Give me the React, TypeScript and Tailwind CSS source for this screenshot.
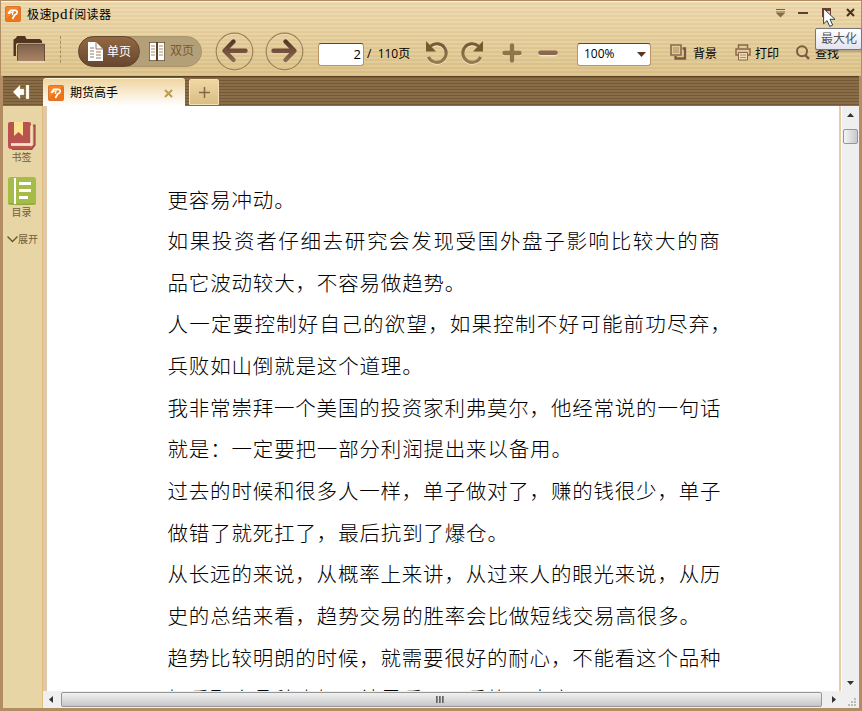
import React from "react";

type Line = { text: string; pitch: number };

const lines: Line[] = [
  { text: "更容易冲动。", pitch: 21.33 },
  { text: "如果投资者仔细去研究会发现受国外盘子影响比较大的商", pitch: 22.16 },
  { text: "品它波动较大，不容易做趋势。", pitch: 21.33 },
  { text: "人一定要控制好自己的欲望，如果控制不好可能前功尽弃，", pitch: 21.72 },
  { text: "兵败如山倒就是这个道理。", pitch: 21.33 },
  { text: "我非常崇拜一个美国的投资家利弗莫尔，他经常说的一句话", pitch: 21.3 },
  { text: "就是：一定要把一部分利润提出来以备用。", pitch: 21.33 },
  { text: "过去的时候和很多人一样，单子做对了，赚的钱很少，单子", pitch: 21.3 },
  { text: "做错了就死扛了，最后抗到了爆仓。", pitch: 21.33 },
  { text: "从长远的来说，从概率上来讲，从过来人的眼光来说，从历", pitch: 21.3 },
  { text: "史的总结来看，趋势交易的胜率会比做短线交易高很多。", pitch: 21.33 },
  { text: "趋势比较明朗的时候，就需要很好的耐心，不能看这个品种", pitch: 21.3 },
  { text: "好看那个品种也好，结果看不了看执不盘实", pitch: 21.33 },
];
const FONT_SIZE = 20.5;

const ui = "font-['Open_Sans','Noto_Sans_CJK_SC',sans-serif]";

function Logo() {
  return (
    <svg width="16" height="16" viewBox="0 0 16 16" className="shrink-0">
      <rect x=".5" y=".5" width="15" height="15" rx="1" fill="#ee7415" stroke="#d9752c" />
      <path d="M1 1h14L1 13Z" fill="#ff983c" opacity=".45" />
      <path d="M3.2 7.8 5.6 4.4h4.6c3.2.2 2.4 3.8-.4 4.4L7.4 13" fill="none" stroke="#fff" strokeWidth="1.7" />
      <path d="M3.6 7.4 8 5.8 7.4 9.2" fill="none" stroke="#fff" strokeWidth="1.2" />
    </svg>
  );
}

function ArrowButton({ right = false }: { right?: boolean }) {
  return (
    <svg width="39" height="39" viewBox="0 0 39 39" className={right ? "-scale-x-100" : ""}>
      <defs>
        <linearGradient id={right ? "ar" : "al"} x1="0" y1="7" x2="0" y2="32" gradientUnits="userSpaceOnUse">
          <stop stopColor="#4f3323" />
          <stop offset="1" stopColor="#997056" />
        </linearGradient>
      </defs>
      <circle cx="19.5" cy="20.3" r="18.2" fill="none" stroke="#f3e0b6" />
      <circle cx="19.5" cy="19.5" r="18.3" fill="none" stroke="#9b815a" strokeWidth="1.2" />
      <path d="M18.5 9.5 9.5 18.8l9 9.2M10 18.8h20.5" fill="none" stroke={right ? "url(#ar)" : "url(#al)"} strokeWidth="4.4" strokeLinecap="round" strokeLinejoin="round" />
    </svg>
  );
}

function Rotate({ right = false }: { right?: boolean }) {
  return (
    <svg width="24" height="25" viewBox="-1 0 24 25" className={right ? "-scale-x-100" : ""}>
      <defs>
        <linearGradient id={right ? "rr" : "rl"} x1="0" y1="0" x2="0" y2="24" gradientUnits="userSpaceOnUse">
          <stop stopColor="#70552f" />
          <stop offset="1" stopColor="#9a8056" />
        </linearGradient>
      </defs>
      <path d="M4.6 6.4A9.3 9.3 0 1 1 2.4 17" fill="none" stroke="#f6e8c2" strokeWidth="3" opacity=".7" />
      <path d="M4.6 5.2A9.3 9.3 0 1 1 2.4 15.8" fill="none" stroke={right ? "url(#rr)" : "url(#rl)"} strokeWidth="3" />
      <path d="M0 0v10.4h10Z" fill="#75592f" />
    </svg>
  );
}

function Toolbar() {
  return (
    <div className="flex h-[51px] items-center pl-[12px]">
      <svg width="34" height="28" viewBox="0 0 34 28" className="mb-[5px]">
        <defs>
          <linearGradient id="folder" x1="0" y1="0" x2="0" y2="1"><stop stopColor="#7d604b" /><stop offset="1" stopColor="#aa8366" /></linearGradient>
        </defs>
        <path d="M.5 21V4.5L3 3l1-2h8l1.5 3H27l2 2v2H4.5L3 9v12Z" fill="#50351f" />
        <path d="M4 26 5 9h26.500l.5 17Z" fill="url(#folder)" />
        <path d="M4.500 25.500V10l1-.8h26V26" fill="none" stroke="#6b4c36" />
        <path d="M5 27h27" stroke="#f5e5be" />
      </svg>
      <div className="mb-1 ml-[13px] h-[27px] border-l border-dashed border-[#a58d60]" />
      <div className="ml-[17px] flex h-[31px] w-[124px] rounded-full border border-[#a9946c] bg-[#b4a078]">
        <div className="-ml-px -mt-px flex h-[31px] w-[62px] items-center rounded-full border border-[#65472d] bg-linear-to-b from-[#926840] to-[#684730] pl-[9px]">
          <svg width="15" height="19" viewBox="0 0 15 19"><path d="M0 0h8l7 7v12H0Z" fill="#fff" /><path d="M8 0v7h7M2 6h4M2 9h4M2 12h4M2 15h4M8 10h5M8 13h5M8 16h5" fill="none" stroke="#9b7b5d" /></svg>
          <span className={`${ui} ml-1 whitespace-nowrap text-[12px] leading-none text-white`}>单页</span>
        </div>
        <div className="flex items-center pb-[1px] pl-[9px]">
          <svg width="16" height="19" viewBox="0 0 16 19"><path d="M0 0h16v19H0Z" fill="#fff" stroke="#5f4325" strokeWidth="1.5" /><path d="M8 0v19" stroke="#5f4325" strokeWidth="2" /><path d="M2 4h4M2 7h4M2 10h4M2 13h4M10 4h4M10 7h4M10 10h4M10 13h4" stroke="#a88c6d" /></svg>
          <span className={`${ui} ml-[5px] whitespace-nowrap text-[12px] leading-none text-[#785a31]`}>双页</span>
        </div>
      </div>
      <div className="ml-[13px] flex gap-[11px]"><ArrowButton /><ArrowButton right /></div>
      <div className={`${ui} ml-[14px] mt-[5px] flex h-[23px] w-[46px] items-center justify-end rounded-[3px] border border-[#b89567] border-t-[#71401d] bg-white pr-[2px] text-[13px] leading-none text-black`}>2</div>
      <div className={`${ui} mt-[5px] ml-[3px] w-[58px] whitespace-nowrap text-[12px] leading-none text-black`}>/&nbsp; 110页</div>
      <div className="mt-[3px] flex gap-[11px]"><Rotate /><Rotate right /></div>
      <svg width="20" height="20" viewBox="0 0 20 20" className="mt-[2px] ml-[18px]">
        <path d="M10 3.500v14.500M2.500 11h15" stroke="#f5e6bb" strokeWidth="4.500" strokeLinecap="round" />
        <path d="M10 2.500v15M2.500 10h15" stroke="#8d754c" strokeWidth="4.400" strokeLinecap="round" />
      </svg>
      <svg width="20" height="8" viewBox="0 0 20 8" className="mt-[3px] ml-[16px]">
        <path d="M2.500 5h15" stroke="#f5e6bb" strokeWidth="4.800" strokeLinecap="round" />
        <path d="M2.500 3.800h15" stroke="#8b6951" strokeWidth="4.600" strokeLinecap="round" />
      </svg>
      <div className={`${ui} mt-[5px] ml-[19px] flex h-[23px] w-[74px] items-center rounded-[3px] border border-[#b89567] border-t-[#71401d] bg-white pl-[6px] text-[12px] leading-none text-black`}>
        100%
        <svg width="9" height="5" className="ml-auto mr-1"><path d="M0 0h9L4.500 5Z" fill="#5b351b" /></svg>
      </div>
      <svg width="17" height="17" viewBox="0 0 17 17" className="mt-[2px] ml-[19px]">
        <path d="M1 1h10v10H1Z" fill="none" stroke="#89694c" strokeWidth="1.600" />
        <path d="M3 4h6M3 6h6M3 8h6" stroke="#aa8e68" />
        <path d="M12.500 4.500H15v10H5.500V12" fill="none" stroke="#795844" strokeWidth="2.300" />
      </svg>
      <span className={`${ui} mt-[5px] ml-[6px] text-[12px] leading-none text-black`}>背景</span>
      <svg width="16" height="17" viewBox="0 0 16 17" className="mt-[2px] ml-[18px]">
        <path d="M3.500 4V1h9v3M3 11H1V5h14v6h-2" fill="none" stroke="#896448" strokeWidth="1.400" />
        <path d="M3.500 8.500h9v7.500h-9Z" fill="#f0deb6" stroke="#896448" />
        <path d="M5 11h6M5 13.500h6" stroke="#a98b65" />
      </svg>
      <span className={`${ui} mt-[5px] ml-[4px] text-[12px] leading-none text-black`}>打印</span>
      <svg width="14" height="15" viewBox="0 0 14 15" className="mt-[2px] ml-[17px]"><circle cx="6" cy="6.300" r="5" fill="none" stroke="#7b5a3e" strokeWidth="2" /><path d="m9.500 10.300 3.500 3.500" stroke="#7b5a3e" strokeWidth="2.400" /></svg>
      <span className={`${ui} mt-[5px] ml-[5px] text-[12px] leading-none text-black`}>查找</span>
    </div>
  );
}

function Header() {
  return (
    <header className="h-[76px] shrink-0 border-t border-[#b28c63] bg-[repeating-linear-gradient(to_bottom,#fff2_0_2px,#c99c440d_2px_4px),linear-gradient(#ecd7aa,#d9bf85)]">
      <div className="flex h-[25px] items-center border-t border-[#fff1cf] pl-[4px] pr-[6px]">
        <Logo />
        <h1 className="ml-[6px] flex items-center whitespace-nowrap font-['Noto_Sans_CJK_SC',sans-serif] text-[12px] leading-none tracking-[0.4px] text-black">
          极速<span className="font-['Liberation_Serif',serif] text-[15px] tracking-[0.8px]">pdf</span>阅读器
        </h1>
        <svg width="11" height="10" viewBox="0 0 11 10" className="ml-auto -mt-[3px]"><path d="M1 1.500h9M1 4h9" stroke="#7d6142" strokeWidth="1.200" /><path d="M1 5h9L5.500 9.500Z" fill="#876b4b" /></svg>
        <div className="ml-[12px] -mt-[2px] h-[2px] w-[10px] bg-[#5b402b]" />
        <div className="ml-[14px] -mt-1 h-[9px] w-[9px] border border-t-[3px] border-[#69402f]" />
        <svg width="9" height="9" viewBox="0 0 9 9" className="ml-[15px] -mt-[3px]"><path d="m1 1 7 7M8 1 1 8" stroke="#4a2d1d" strokeWidth="2" /></svg>
      </div>
      <Toolbar />
    </header>
  );
}

function Tabs() {
  return (
    <div className="flex h-[30px] shrink-0 items-end border-t border-[#5f4221] bg-[repeating-linear-gradient(to_bottom,#745837_0_1px,#886d46_1px_3px)]">
      <button className="mb-[7px] ml-[10px] flex h-[15px] items-center">
        <svg width="17" height="14" viewBox="0 0 17 14"><path d="M0 7 7 0v4h4v6H7v4ZM13 0h3v14h-3Z" fill="#fff" stroke="#d9bd78" strokeWidth=".4" /></svg>
      </button>
      <div className="ml-[13px] flex h-[28px] w-[142px] items-center rounded-t-[3px] border-t border-[#fff4d0] bg-linear-to-b from-[#efd5a0] to-white pl-[5px]">
        <Logo />
        <span className={`${ui} ml-[6px] text-[12px] leading-none text-black`}>期货高手</span>
        <svg width="9" height="9" viewBox="0 0 9 9" className="ml-auto mr-[12px] mt-[2px]"><path d="m1 1 7 7M8 1 1 8" stroke="#bd9c52" strokeWidth="2" /></svg>
      </div>
      <div className="ml-[4px] mb-px flex h-[26px] w-[30px] items-center justify-center rounded-t-[2px] border border-[#f2e1b8] bg-linear-to-b from-[#f0d6a2] to-[#d9bf85]">
        <svg width="11" height="11"><path d="M5.500 0v11M0 5.500h11" stroke="#806948" strokeWidth="1.500" /></svg>
      </div>
    </div>
  );
}

function Sidebar() {
  const label = `${ui} text-[10px] leading-none text-[#705d3a]`;
  return (
    <aside className="flex w-[40px] shrink-0 flex-col items-center border-r border-[#dfbd76] bg-[#e8d5a6] pt-[16px] pr-[2px]">
      <svg width="28" height="29" viewBox="0 0 28 29">
        <path d="M25 3.500h1.500v19.500l-3 4H4" fill="none" stroke="#ac4847" strokeWidth="2.200" />
        <path d="M2 0h19q2 0 2 2v19H3v3h21l-2 3H3q-3 0-3-3V2q0-2 2-2Z" fill="#b9534f" />
        <path d="M3 22.500h20V3.500" fill="none" stroke="#f5e3c3" strokeWidth="1.500" />
        <path d="M6 0h9v14l-4.500-4L6 14Z" fill="#fde28f" />
      </svg>
      <span className={`${label} mt-[1px]`}>书签</span>
      <svg width="28" height="28" viewBox="0 0 28 28" className="mt-[15px]"><rect width="28" height="28" rx="2.500" fill="#a6bc49" /><path d="M.5 26.700q13 1.500 27 0" fill="none" stroke="#8aa13b" /><path d="M6 1h2v26H6ZM11 5h12v3H11ZM11 12h12v3H11ZM11 19h9v3h-9Z" fill="white" /></svg>
      <span className={`${label} mt-[2px]`}>目录</span>
      <div className="mt-[17px] flex w-full items-center pl-[4px]">
        <svg width="11" height="7" className="shrink-0"><path d="m.5.5 5 5 5-5" fill="none" stroke="#64512f" strokeWidth="1.300" /></svg>
        <span className={`${label} whitespace-nowrap`}>展开</span>
      </div>
    </aside>
  );
}

function Pointer() {
  return (
    <svg width="13" height="20" viewBox="0 0 13 20" className="absolute left-[823px] top-[8px]">
      <path d="M.6.6v15.200l3.500-3.200 2.600 5.800 3-1.300-2.700-5.800h5Z" fill="#fff" stroke="#304050" />
    </svg>
  );
}

export default function App() {
  return (
    <div className="relative flex h-[711px] w-[862px] flex-col overflow-hidden bg-[#b28c63] px-px">
      <Header />
      <div className="flex h-[632px] min-h-0 flex-col border-l-2 border-r-2 border-[#b28c63]">
        <Tabs />
        <main className="flex h-[602px] min-h-0">
          <Sidebar />
          <div className="flex min-w-0 flex-1 flex-col bg-[#f0f0f0]">
            <div className="flex h-[585px] shrink-0">
              <div className="w-[4px] shrink-0 bg-[#dfc8ad]" />
              <article className="min-w-0 flex-1 overflow-hidden bg-white pt-[72.5px] pl-[120.5px]">
                {lines.map(({ text, pitch }) => (
                  <p
                    key={text}
                    className="h-[41.65px] whitespace-nowrap font-['Noto_Sans_CJK_SC',sans-serif] font-light leading-[41.65px] text-black"
                    style={{ fontSize: FONT_SIZE, letterSpacing: pitch - FONT_SIZE }}
                  >
                    {text}
                  </p>
                ))}
              </article>
              <div className="w-[2px] shrink-0 bg-[#e3cda8]" />
              <div className="flex w-[18px] shrink-0 flex-col items-center border-l border-white bg-[#efefef] pr-px">
                <svg width="7" height="4" className="mt-[7px]"><path d="M3.500 0 7 4H0Z" fill="#333" /></svg>
                <div className="mt-[12px] h-[15px] w-[15px] rounded-[2px] border border-[#969696] bg-linear-to-r from-[#f4f4f4] to-[#c9c9cd]" />
                <svg width="7" height="4" className="mt-auto mb-[6px]"><path d="M0 0h7L3.500 4Z" fill="#333" /></svg>
              </div>
            </div>
            <div className="flex h-[17px] items-center bg-[#efefef]">
              <svg width="4" height="7" className="ml-[6px]"><path d="M4 0v7L0 3.500Z" fill="#333" /></svg>
              <div className="ml-[8px] flex h-[15px] w-[761px] shrink-0 items-center justify-center gap-[1px] rounded-[2px] border border-[#969696] bg-linear-to-b from-[#f1f1f1] via-[#dcdcdc] to-[#c5c5c9] pr-[3px]">
                <i className="h-[7px] w-[2px] bg-linear-to-r from-[#555] to-[#999]" /><i className="h-[7px] w-[2px] bg-linear-to-r from-[#555] to-[#999]" /><i className="h-[7px] w-[2px] bg-linear-to-r from-[#555] to-[#999]" />
              </div>
              <svg width="4" height="7" className="ml-[10px]"><path d="M0 0v7l4-3.500Z" fill="#333" /></svg>
              <svg width="9" height="9" className="ml-auto mr-[2px] mt-[5px]"><path d="M6 0h2v2H6ZM3 3h2v2H3ZM6 3h2v2H6ZM0 6h2v2H0ZM3 6h2v2H3ZM6 6h2v2H6Z" fill="#bbb" /></svg>
            </div>
          </div>
        </main>
      </div>
      <Pointer />
      <div className={`${ui} absolute left-[815px] top-[28px] flex h-[22px] w-[47px] items-center rounded-[2px] border border-[#777] bg-linear-to-b from-white to-[#e3e4f0] pl-[5px] text-[12px] leading-none text-[#555] shadow-[1px_2px_2px_#5555]`}>
        <span className="whitespace-nowrap">最大化</span>
      </div>
    </div>
  );
}
